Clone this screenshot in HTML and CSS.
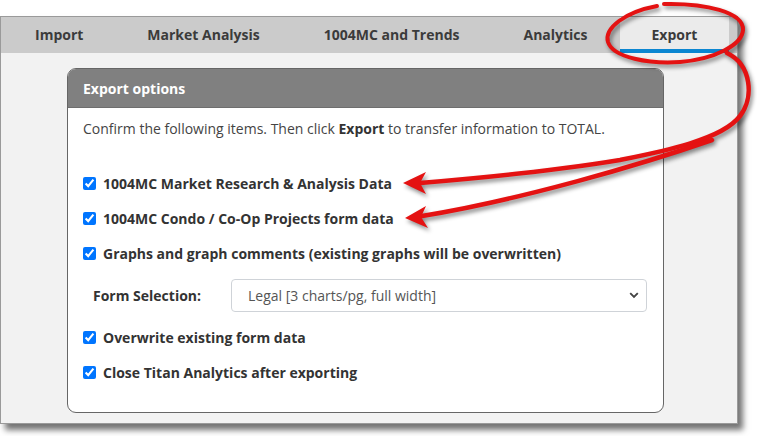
FILE: index.html
```html
<!DOCTYPE html>
<html>
<head>
<meta charset="utf-8">
<link rel="stylesheet" href="styles.css">
</head>
<body>
<div class="page">
  <div class="window">
    <nav class="tabs">
      <div class="tab">Import</div>
      <div class="tab">Market Analysis</div>
      <div class="tab">1004MC and Trends</div>
      <div class="tab">Analytics</div>
      <div class="tab active">Export</div>
    </nav>
    <main class="content">
      <section class="card">
        <header class="card-head">Export options</header>
        <div class="card-body">
          <p class="intro">Confirm the following items. Then click <b>Export</b> to transfer information to TOTAL.</p>
          <div class="options">
            <label class="opt"><input type="checkbox" checked><span>1004MC Market Research &amp; Analysis Data</span></label>
            <label class="opt"><input type="checkbox" checked><span>1004MC Condo / Co-Op Projects form data</span></label>
            <label class="opt"><input type="checkbox" checked><span>Graphs and graph comments (existing graphs will be overwritten)</span></label>
            <div class="form-row">
              <span class="form-label">Form Selection:</span>
              <div class="select-wrap">
                <select class="select">
                  <option>Legal [3 charts/pg, full width]</option>
                </select>
                <svg class="chev" width="10" height="7" viewBox="0 0 10 7"><path d="M1.2 1.2 L5 5 L8.8 1.2" fill="none" stroke="#444" stroke-width="1.9"/></svg>
              </div>
            </div>
            <label class="opt"><input type="checkbox" checked><span>Overwrite existing form data</span></label>
            <label class="opt"><input type="checkbox" checked><span>Close Titan Analytics after exporting</span></label>
          </div>
        </div>
      </section>
    </main>
  </div>
  <svg class="annot" width="757" height="436" viewBox="0 0 757 436">
    <g fill="none" stroke="#e41212" stroke-linecap="round">
      <path stroke-width="4" d="M657 6 C625 12, 604 28, 608 42 C613 58, 650 64, 680 62 C715 59, 742 45, 743 30 C744 12, 705 3, 664 4"/>
      <path stroke-width="4.5" d="M727 53 C752 65, 754 98, 740 116 C722 140, 660 152, 620 160 C560 170, 480 178, 420 183"/>
      <path stroke-width="4.5" d="M712 140 C640 165, 520 200, 422 216"/>
    </g>
    <g fill="#e41212">
      <polygon points="403,183 426,172 420,183 426,194"/>
      <polygon points="405,218 426,206 421,217 428,228"/>
    </g>
  </svg>
</div>
</body>
</html>
```
FILE: styles.css
```css
* { box-sizing: border-box; }
html, body {
  margin: 0;
  padding: 0;
  background: #ffffff;
  font-family: "Open Sans", "Liberation Sans", sans-serif;
  font-size: 14px;
  color: #333;
}
.page {
  position: relative;
  width: 757px;
  height: 436px;
  overflow: hidden;
}
.window {
  margin-top: 16px;
  width: 738px;
  height: 408px;
  border: 1px solid #9a9a9a;
  background: #f2f2f2;
  box-shadow: 5px 6px 6px rgba(0,0,0,0.55);
  display: flex;
  flex-direction: column;
}
.tabs {
  display: flex;
  height: 36px;
  background: #cbcbcb;
  padding-left: 2px;
}
.tab {
  padding: 2px 32px 0 32px;
  display: flex;
  align-items: center;
  font-weight: 700;
  color: #3b3b3b;
  height: 36px;
  border-bottom: 4px solid transparent;
}
.tab.active {
  background: #ebebeb;
  border-bottom-color: #0b86d1;
}
.content {
  flex: 1;
  padding: 15px 0 10px 66px;
}
.card {
  width: 597px;
  height: 345px;
  border: 1px solid #666;
  border-radius: 9px;
  background: #fff;
  overflow: hidden;
}
.card-head {
  height: 39px;
  background: #808080;
  color: #fff;
  font-weight: 700;
  display: flex;
  align-items: center;
  padding-left: 15px;
  border-bottom: 1px solid #6e6e6e;
}
.card-body {
  padding: 11px 15px 0 15px;
}
.intro {
  margin: 0;
  line-height: 20px;
  color: #444;
}
.intro b { color: #333; }
.options {
  margin-top: 27px;
  display: flex;
  flex-direction: column;
}
.opt {
  display: flex;
  align-items: center;
  height: 35px;
  font-weight: 700;
  color: #333;
}
.opt input {
  margin: 0 7px 0 0;
  width: 13px;
  height: 13px;
}
.form-row {
  display: flex;
  align-items: center;
  margin: 8px 0 8px 0;
  padding-left: 10px;
}
.form-label {
  width: 138px;
  font-weight: 700;
  color: #333;
}
.select-wrap {
  position: relative;
  flex: 1;
}
.select {
  -webkit-appearance: none;
  appearance: none;
  width: 416px;
  height: 33px;
  border: 1px solid #cfd3d8;
  border-radius: 4px;
  background: #fff;
  font-family: "Open Sans", "Liberation Sans", sans-serif;
  font-size: 14px;
  color: #555;
  padding: 0 30px 0 16px;
}
.chev {
  position: absolute;
  left: 398px;
  top: 13px;
}
.annot {
  position: absolute;
  left: 0;
  top: 0;
  pointer-events: none;
  filter: drop-shadow(2px 3px 2px rgba(0,0,0,0.45));
}
```
